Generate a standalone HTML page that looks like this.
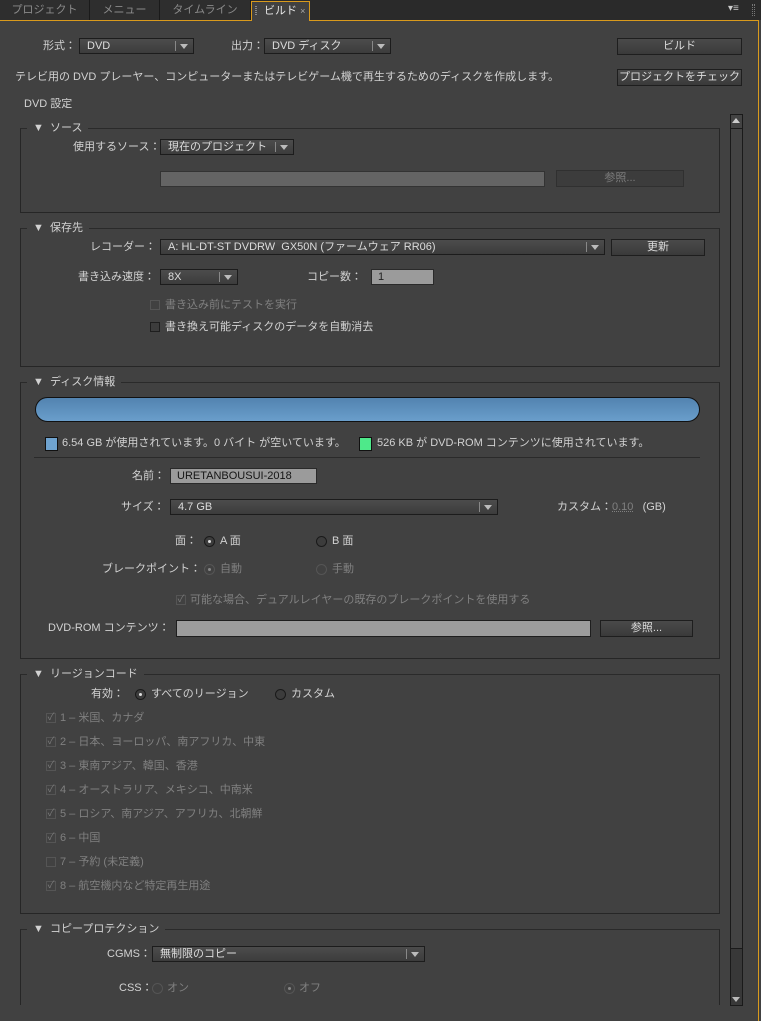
<!DOCTYPE html>
<html><head><meta charset="utf-8"><style>
*{margin:0;padding:0;box-sizing:border-box}
body{width:761px;height:1021px;background:#414141;position:relative;overflow:hidden;font:11px "Liberation Sans","Noto Sans CJK JP",sans-serif;color:#d2d2d2}
.a{position:absolute;white-space:nowrap;line-height:14px}
.dim{color:#808080}
.dd{position:absolute;height:16px;border:1px solid #1c1c1c;background:linear-gradient(#4c4c4c,#3c3c3c);padding-left:7px;line-height:14px;color:#dcdcdc}
.dd:after{content:"";position:absolute;right:5px;top:5px;border-left:4px solid transparent;border-right:4px solid transparent;border-top:5px solid #bbb}
.dd:before{content:"";position:absolute;right:17px;top:2px;width:1px;height:10px;background:#888}
.btn{position:absolute;height:17px;border:1px solid #1e1e1e;background:linear-gradient(#4a4a4a,#3a3a3a);text-align:center;line-height:15px;color:#dcdcdc}
.box{position:absolute;left:20px;width:700px;border:1px solid #262626;border-top-color:#2a2a2a}
.lg{position:absolute;top:-8px;left:6px;background:#414141;padding:0 6px;line-height:14px;color:#d2d2d2}
.in{position:absolute;height:16px;border:1px solid #2a2a2a;background:#9b9b9b;color:#151515;padding-left:6px;line-height:14px}
.cb{position:absolute;width:10px;height:10px;border:1px solid #1e1e1e;background:#3c3c3c}
.cbd{position:absolute;width:10px;height:10px;border:1px solid #555;color:#7a7a7a;font-size:10px;line-height:8px;text-align:center}
.rb{position:absolute;width:11px;height:11px;border:1px solid #1a1a1a;border-radius:50%;background:#3c3c3c}
.rb.on:after{content:"";position:absolute;left:3px;top:3px;width:3px;height:3px;border-radius:50%;background:#ddd}
.rb.d{border-color:#555;background:none}
.rb.d.on:after{background:#888}
.tab{position:absolute;top:0;height:20px;border-right:1px solid #1a1a1a;color:#8a8a8a;text-align:center;line-height:20px;background:#2e2e2e}
</style></head><body>
<div class="a" style="left:0;top:0;width:761px;height:20px;background:#2a2a2a"></div>
<div class="tab" style="left:0;width:90px">プロジェクト</div>
<div class="tab" style="left:90px;width:70px">メニュー</div>
<div class="tab" style="left:160px;width:91px">タイムライン</div>
<div class="a" style="left:0;top:20px;width:252px;height:1px;background:#d99a1c"></div>
<div class="a" style="left:309px;top:20px;width:450px;height:1px;background:#d99a1c"></div>
<div class="a" style="left:251px;top:1px;width:59px;height:20px;border:1px solid #d99a1c;border-bottom:none;background:#414141;color:#e6e6e6;line-height:18px;padding-left:12px">ビルド <span style="font-size:9px;color:#aaa">×</span></div>
<div class="a" style="left:255px;top:6px;width:2px;height:9px;border-left:1px dotted #888;border-right:1px dotted #888"></div>
<div class="a" style="left:758px;top:20px;width:1px;height:1001px;background:#d99a1c"></div>
<div class="a" style="left:728px;top:4px;color:#ccc;font-size:10px;line-height:10px">▾≡</div>
<div class="a" style="left:752px;top:4px;width:3px;height:12px;border-left:1px dotted #777;border-right:1px dotted #777"></div>

<div class="a" style="left:43px;top:39px">形式：</div>
<div class="dd" style="left:79px;top:38px;width:115px">DVD</div>
<div class="a" style="left:231px;top:39px">出力：</div>
<div class="dd" style="left:264px;top:38px;width:127px">DVD ディスク</div>
<div class="btn" style="left:617px;top:38px;width:125px">ビルド</div>
<div class="a" style="left:15px;top:70px">テレビ用の DVD プレーヤー、コンピューターまたはテレビゲーム機で再生するためのディスクを作成します。</div>
<div class="btn" style="left:617px;top:69px;width:125px">プロジェクトをチェック</div>
<div class="a" style="left:24px;top:97px">DVD 設定</div>

<div class="box" style="top:128px;height:85px"><div class="lg">▼&nbsp; ソース</div></div>
<div class="a" style="left:73px;top:140px">使用するソース：</div>
<div class="dd" style="left:160px;top:139px;width:134px">現在のプロジェクト</div>
<div class="a" style="left:160px;top:171px;width:385px;height:16px;background:#646464;border:1px solid #333"></div>
<div class="btn dim" style="left:556px;top:170px;width:128px;background:#3c3c3c;border-color:#303030;color:#7c7c7c">参照...</div>

<div class="box" style="top:228px;height:139px"><div class="lg">▼&nbsp; 保存先</div></div>
<div class="a" style="left:90px;top:240px">レコーダー：</div>
<div class="dd" style="left:160px;top:239px;width:445px">A: HL-DT-ST DVDRW&nbsp; GX50N (ファームウェア RR06)</div>
<div class="btn" style="left:611px;top:239px;width:94px">更新</div>
<div class="a" style="left:78px;top:270px">書き込み速度：</div>
<div class="dd" style="left:160px;top:269px;width:78px">8X</div>
<div class="a" style="left:307px;top:270px">コピー数：</div>
<div class="in" style="left:371px;top:269px;width:63px;color:#222">1</div>
<div class="cbd" style="left:150px;top:300px"></div>
<div class="a dim" style="left:165px;top:298px">書き込み前にテストを実行</div>
<div class="cb" style="left:150px;top:322px"></div>
<div class="a" style="left:165px;top:320px">書き換え可能ディスクのデータを自動消去</div>

<div class="box" style="top:382px;height:277px"><div class="lg">▼&nbsp; ディスク情報</div></div>
<div class="a" style="left:35px;top:397px;width:665px;height:25px;border:1px solid #111;border-radius:13px;background:linear-gradient(#5283b0,#6a9ecb)"></div>
<div class="a" style="left:45px;top:437px;width:13px;height:14px;background:#6fa3cf;border:1px solid #111"></div>
<div class="a" style="left:62px;top:436px">6.54 GB が使用されています。0 バイト が空いています。</div>
<div class="a" style="left:359px;top:437px;width:13px;height:14px;background:#4ee98a;border:1px solid #111"></div>
<div class="a" style="left:377px;top:436px">526 KB が DVD-ROM コンテンツに使用されています。</div>
<div class="a" style="left:34px;top:457px;width:666px;height:1px;background:#2a2a2a"></div>
<div class="a" style="left:132px;top:469px">名前：</div>
<div class="in" style="left:170px;top:468px;width:147px">URETANBOUSUI-2018</div>
<div class="a" style="left:121px;top:500px">サイズ：</div>
<div class="dd" style="left:170px;top:499px;width:328px">4.7 GB</div>
<div class="a" style="left:557px;top:500px">カスタム：<span class="dim" style="text-decoration:underline dotted">0.10</span>&nbsp;&nbsp; (GB)</div>
<div class="a" style="left:175px;top:534px">面：</div>
<div class="rb on" style="left:204px;top:536px"></div><div class="a" style="left:220px;top:534px">A 面</div>
<div class="rb" style="left:316px;top:536px"></div><div class="a" style="left:332px;top:534px">B 面</div>
<div class="a" style="left:102px;top:562px">ブレークポイント：</div>
<div class="rb d on" style="left:204px;top:564px"></div><div class="a dim" style="left:220px;top:562px">自動</div>
<div class="rb d" style="left:316px;top:564px"></div><div class="a dim" style="left:332px;top:562px">手動</div>
<div class="cbd" style="left:176px;top:595px">✓</div>
<div class="a dim" style="left:190px;top:593px">可能な場合、デュアルレイヤーの既存のブレークポイントを使用する</div>
<div class="a" style="left:48px;top:621px">DVD-ROM コンテンツ：</div>
<div class="a" style="left:176px;top:620px;width:415px;height:17px;background:#9c9c9c;border:1px solid #1e1e1e"></div>
<div class="btn" style="left:600px;top:620px;width:93px">参照...</div>

<div class="box" style="top:674px;height:240px"><div class="lg">▼&nbsp; リージョンコード</div></div>
<div class="a" style="left:91px;top:687px">有効：</div>
<div class="rb on" style="left:135px;top:689px"></div><div class="a" style="left:151px;top:687px">すべてのリージョン</div>
<div class="rb" style="left:275px;top:689px"></div><div class="a" style="left:291px;top:687px">カスタム</div>
<div class="cbd" style="left:46px;top:713px">✓</div><div class="a dim" style="left:60px;top:711px">1 – 米国、カナダ</div>
<div class="cbd" style="left:46px;top:737px">✓</div><div class="a dim" style="left:60px;top:735px">2 – 日本、ヨーロッパ、南アフリカ、中東</div>
<div class="cbd" style="left:46px;top:761px">✓</div><div class="a dim" style="left:60px;top:759px">3 – 東南アジア、韓国、香港</div>
<div class="cbd" style="left:46px;top:785px">✓</div><div class="a dim" style="left:60px;top:783px">4 – オーストラリア、メキシコ、中南米</div>
<div class="cbd" style="left:46px;top:809px">✓</div><div class="a dim" style="left:60px;top:807px">5 – ロシア、南アジア、アフリカ、北朝鮮</div>
<div class="cbd" style="left:46px;top:833px">✓</div><div class="a dim" style="left:60px;top:831px">6 – 中国</div>
<div class="cbd" style="left:46px;top:857px"></div><div class="a dim" style="left:60px;top:855px">7 – 予約 (未定義)</div>
<div class="cbd" style="left:46px;top:881px">✓</div><div class="a dim" style="left:60px;top:879px">8 – 航空機内など特定再生用途</div>

<div class="box" style="top:929px;height:90px;border-bottom:none"><div class="lg">▼&nbsp; コピープロテクション</div></div>
<div class="a" style="left:107px;top:947px">CGMS：</div>
<div class="dd" style="left:152px;top:946px;width:273px">無制限のコピー</div>
<div class="a" style="left:119px;top:981px">CSS：</div>
<div class="rb d" style="left:152px;top:983px"></div><div class="a dim" style="left:167px;top:981px">オン</div>
<div class="rb d on" style="left:284px;top:983px"></div><div class="a dim" style="left:299px;top:981px">オフ</div>
<div class="a" style="left:0;top:1005px;width:758px;height:16px;background:#414141"></div>

<div class="a" style="left:730px;top:114px;width:13px;height:892px;border:1px solid #1a1a1a;background:#383838"></div>
<div class="a" style="left:730px;top:114px;width:13px;height:835px;border:1px solid #1a1a1a;background:#434343"></div>
<div class="a" style="left:732px;top:118px;border-left:4px solid transparent;border-right:4px solid transparent;border-bottom:5px solid #ccc"></div>
<div class="a" style="left:730px;top:128px;width:13px;height:1px;background:#1a1a1a"></div>
<div class="a" style="left:732px;top:997px;border-left:4px solid transparent;border-right:4px solid transparent;border-top:5px solid #bbb"></div>
</body></html>
